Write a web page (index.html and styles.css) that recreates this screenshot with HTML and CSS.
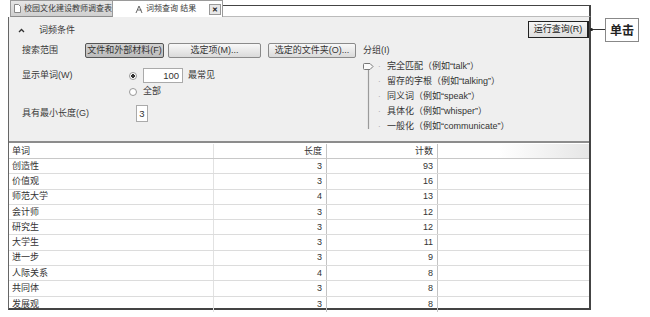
FILE: index.html
```html
<!DOCTYPE html>
<html lang="zh-CN">
<head>
    <meta charset="UTF-8">
    <meta name="viewport" content="width=device-width, initial-scale=1.0">
    <title>词频查询 结果</title>
    <link rel="stylesheet" href="styles.css">
</head>
<body>
    <div class="window">
        <div class="tabs">
            <div class="tab tab-inactive">
                <svg class="tab-icon" width="7" height="9" viewBox="0 0 7 9"><path d="M0.5 0.5h4l2 2v6h-6z" fill="#fff" stroke="#888"/></svg>
                校园文化建设教师调查表
            </div>
            <div class="tab tab-active">
                <svg class="tab-icon" width="9" height="9" viewBox="0 0 9 9"><path d="M1 8l3-7 3 7M2.5 5h4" fill="none" stroke="#666"/></svg>
                词频查询 结果
                <span class="tab-close">✕</span>
            </div>
            <div class="tab-fill"></div>
        </div>

        <div class="frame">
            <div class="panel">
                <div class="panel-head">
                    <div class="panel-title">
                        <svg class="caret" width="7" height="5" viewBox="0 0 7 5"><path d="M1 4l2.5-2.5L6 4" fill="none" stroke="#333" stroke-width="1.3"/></svg>
                        词频条件
                    </div>
                    <button class="run-btn">运行查询(R)</button>
                </div>

                <div class="panel-body">
                    <div class="criteria">
                        <div class="scope-row">
                            <span class="scope-label">搜索范围</span>
                            <button class="btn btn-pressed btn-files">文件和外部材料(F)</button>
                            <button class="btn btn-items">选定项(M)...</button>
                            <button class="btn btn-folders">选定的文件夹(O)...</button>
                        </div>

                        <div class="words-row">
                            <span class="opt-label">显示单词(W)</span>
                            <span class="radio radio-on"></span>
                            <span class="num-box num-wide">100</span>
                            <span>最常见</span>
                        </div>
                        <div class="all-row">
                            <span class="radio"></span>
                            <span>全部</span>
                        </div>
                        <div class="len-row">
                            <span class="opt-label len-label">具有最小长度(G)</span>
                            <span class="num-box num-narrow">3</span>
                        </div>
                    </div>

                    <div class="grouping">
                        <div class="group-title">分组(I)</div>
                        <div class="slider">
                            <svg class="slider-track" width="11" height="66" viewBox="0 0 11 66">
                                <line x1="5.5" y1="6" x2="5.5" y2="66" stroke="#9a9a9a" stroke-width="1.2"/>
                                <path d="M1.5 0.5h5.5l3 3-3 3h-5.5a1 1 0 0 1-1-1v-4a1 1 0 0 1 1-1z" fill="#fafafa" stroke="#777"/>
                            </svg>
                            <ul class="levels">
                                <li><span class="tick">·</span>完全匹配（例如“talk”）</li>
                                <li><span class="tick">·</span>留存的字根（例如“talking”）</li>
                                <li><span class="tick">·</span>同义词（例如“speak”）</li>
                                <li><span class="tick">·</span>具体化（例如“whisper”）</li>
                                <li><span class="tick">·</span>一般化（例如“communicate”）</li>
                            </ul>
                        </div>
                    </div>
                </div>
            </div>

            <div class="results">
                <div class="row row-head">
                    <div class="cell">单词</div>
                    <div class="cell num">长度</div>
                    <div class="cell num">计数</div>
                    <div class="cell"></div>
                </div>
                <div class="row"><div class="cell">创造性</div><div class="cell num">3</div><div class="cell num">93</div><div class="cell"></div></div>
                <div class="row"><div class="cell">价值观</div><div class="cell num">3</div><div class="cell num">16</div><div class="cell"></div></div>
                <div class="row"><div class="cell">师范大学</div><div class="cell num">4</div><div class="cell num">13</div><div class="cell"></div></div>
                <div class="row"><div class="cell">会计师</div><div class="cell num">3</div><div class="cell num">12</div><div class="cell"></div></div>
                <div class="row"><div class="cell">研究生</div><div class="cell num">3</div><div class="cell num">12</div><div class="cell"></div></div>
                <div class="row"><div class="cell">大学生</div><div class="cell num">3</div><div class="cell num">11</div><div class="cell"></div></div>
                <div class="row"><div class="cell">进一步</div><div class="cell num">3</div><div class="cell num">9</div><div class="cell"></div></div>
                <div class="row"><div class="cell">人际关系</div><div class="cell num">4</div><div class="cell num">8</div><div class="cell"></div></div>
                <div class="row"><div class="cell">共同体</div><div class="cell num">3</div><div class="cell num">8</div><div class="cell"></div></div>
                <div class="row"><div class="cell">发展观</div><div class="cell num">3</div><div class="cell num">8</div><div class="cell"></div></div>
            </div>
        </div>
    </div>

    <!-- annotation next to the run button -->
    <div class="callout-line"></div>
    <div class="callout">单击</div>
</body>
</html>
```

FILE: styles.css
```css
body {
    margin: 0;
    width: 650px;
    height: 317px;
    overflow: hidden;
    position: relative;
    background: #fff;
    color: #3a3a3a;
    font-family: 'Liberation Sans', 'Noto Sans CJK SC', sans-serif;
    font-size: 9px;
    line-height: 1;
}
.window {
    margin-left: 8px;
    width: 583px;
}

/* tab strip */
.tabs {
    display: flex;
    height: 17px;
    padding-left: 2px;
    font-size: 8px;
}
.tab {
    display: flex;
    align-items: center;
    box-sizing: border-box;
    height: 17px;
    white-space: nowrap;
    overflow: hidden;
}
.tab-inactive {
    width: 103px;
    padding-left: 3px;
    gap: 3px;
    background: linear-gradient(#e6e6e6, #cfcfcf);
    border: 1px solid #9a9a9a;
    border-bottom-color: #8c8c8c;
}
.tab-active {
    width: 110px;
    padding-left: 22px;
    gap: 2px;
    background: #fff;
    border-top: 1px solid #9a9a9a;
    border-right: 1px solid #9a9a9a;
}
.tab-icon {
    flex: none;
}
.tab-close {
    margin-left: 11px;
    width: 10px;
    height: 9px;
    border: 1px solid #999;
    background: #e8e8e8;
    font-size: 7px;
    font-weight: bold;
    display: flex;
    align-items: center;
    justify-content: center;
    color: #222;
}
.tab-fill {
    flex: 1;
    margin-top: 5px;
    border-top: 1px solid #444;
    border-right: 2px solid #444;
    border-bottom: 1px solid #bbb;
    background: #fff;
}

/* frame below tabs */
.frame {
    border-left: 1px solid #666;
    border-right: 2px solid #444;
    border-bottom: 2px solid #444;
}
.panel {
    height: 124px;
    background: #efefef;
    box-sizing: border-box;
}
.panel-head {
    display: flex;
    justify-content: space-between;
    height: 26px;
}
.panel-title {
    display: flex;
    align-items: center;
    gap: 14px;
    padding-left: 9px;
    height: 26px;
    padding-top: 1px;
    box-sizing: border-box;
}
.run-btn {
    margin-top: 4px;
    width: 61px;
    height: 17px;
    padding: 0;
    font: inherit;
    color: #222;
    background: linear-gradient(#f6f6f6, #dedede);
    border: 1px solid #222;
    border-right-width: 2px;
}

.panel-body {
    display: grid;
    grid-template-columns: 341px 1fr;
    padding-left: 13px;
}
.scope-row {
    display: flex;
    align-items: center;
    height: 15px;
}
.scope-label {
    width: 63px;
}
.btn {
    height: 15px;
    padding: 0;
    font: inherit;
    color: #333;
    background: linear-gradient(#f8f8f8, #dadada);
    border: 1px solid #8a8a8a;
    border-radius: 2px;
}
.btn-pressed {
    background: linear-gradient(#d2d2d2, #bcbcbc);
    border-color: #555;
}
.btn-files { width: 79px; }
.btn-items { width: 93px; margin-left: 4px; }
.btn-folders { width: 88px; margin-left: 7px; }

.words-row,
.all-row,
.len-row {
    display: flex;
    align-items: center;
}
.words-row {
    margin-top: 10px;
    height: 15px;
}
.opt-label {
    width: 107px;
}
.radio {
    width: 6px;
    height: 6px;
    border: 1px solid #999;
    border-radius: 50%;
    background: #fff;
    margin-right: 6px;
    box-sizing: content-box;
}
.radio-on {
    background: radial-gradient(circle, #333 0 1.6px, #fff 2px);
}
.num-box {
    box-sizing: border-box;
    height: 15px;
    background: #fff;
    border: 1px solid #aaa;
    display: flex;
    align-items: center;
    font-size: 9.5px;
    color: #333;
}
.num-wide {
    width: 40px;
    justify-content: flex-end;
    padding-right: 3px;
    margin-right: 5px;
}
.all-row {
    margin-top: 2px;
    height: 13px;
    padding-left: 107px;
}
.len-row {
    margin-top: 7px;
    height: 17px;
}
.len-label {
    width: 114px;
}
.num-narrow {
    width: 12px;
    height: 17px;
    justify-content: center;
}

/* grouping slider */
.group-title {
    height: 15px;
    padding-top: 3px;
    box-sizing: border-box;
}
.slider {
    display: flex;
    align-items: flex-start;
}
.slider-track {
    margin-top: 5px;
    flex: none;
}
.levels {
    list-style: none;
    margin: 1px 0 0 4px;
    padding: 0;
}
.levels li {
    height: 15px;
    display: flex;
    align-items: center;
    white-space: nowrap;
    color: #333;
}
.tick {
    width: 9px;
    color: #999;
    font-size: 8px;
}

/* result grid */
.results {
    border-top: 2px solid #8c8c8c;
    padding-top: 1px;
    height: 167px;
    box-sizing: border-box;
    color: #333;
}
.row {
    display: grid;
    grid-template-columns: 205px 113px 111px 1fr;
    box-sizing: border-box;
    height: 15.3px;
    border-bottom: 1px solid #dcdcdc;
}
.row-head {
    height: 15px;
    border-bottom-color: #c8c8c8;
}
.row:last-child {
    border-bottom: none;
}
.row-head .cell:last-child {
    background: linear-gradient(90deg, #fff 40%, #e6e6e6);
}
.cell {
    display: flex;
    align-items: center;
    padding: 0 3px;
    border-right: 1px solid #c4c4c4;
}
.cell:first-child {
    border-right-color: #e2e2e2;
}
.cell:last-child {
    border-right: none;
}
.num {
    justify-content: flex-end;
    padding-right: 4px;
}

/* annotation */
.callout-line {
    position: absolute;
    left: 591px;
    top: 29px;
    width: 14px;
    height: 1px;
    background: #333;
}
.callout-line::before {
    content: '';
    position: absolute;
    left: -1px;
    top: -1px;
    width: 3px;
    height: 3px;
    border-radius: 50%;
    background: #222;
}
.callout {
    position: absolute;
    left: 605px;
    top: 18px;
    width: 34px;
    height: 24px;
    box-sizing: border-box;
    border: 1px solid #888;
    background: #fff;
    display: flex;
    align-items: center;
    justify-content: center;
    font-family: 'Noto Sans CJK SC', sans-serif;
    font-size: 12px;
    font-weight: bold;
    color: #222;
}
```
